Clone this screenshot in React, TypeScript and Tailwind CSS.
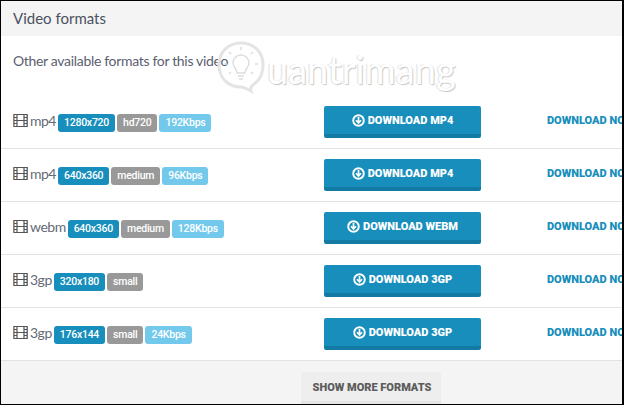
const blue = "bg-[#178ebb]";
const grey = "bg-[#999999]";
const light = "bg-[#73c9ec]";

type Row = { fmt: string; labels: [string, string, string?] };
const rows: Row[] = [
  { fmt: "mp4", labels: ["1280x720", "hd720", "192Kbps"] },
  { fmt: "mp4", labels: ["640x360", "medium", "96Kbps"] },
  { fmt: "webm", labels: ["640x360", "medium", "128Kbps"] },
  { fmt: "3gp", labels: ["320x180", "small"] },
  { fmt: "3gp", labels: ["176x144", "small", "24Kbps"] },
];

function Badge({ text, color }: { text: string; color: string }) {
  return (
    <span className={`${color} flex h-[18px] items-center rounded-[3px] px-[6px] font-['Roboto',sans-serif] text-[10.5px] font-medium leading-none tracking-[-0.25px] text-white`}>
      {text}
    </span>
  );
}

function FilmIcon() {
  return (
    <svg width="15" height="13" viewBox="0 0 15 13" fill="none" className="shrink-0">
      <path d="M0.5 0V13" stroke="#e0a468" />
      <path d="M14.5 0V13" stroke="#7f9fc4" />
      <rect x="1" y="0.5" width="13" height="12" stroke="#555555" />
      <path d="M4 0V13M11 0V13M4 6.5H11" stroke="#555555" strokeWidth="1.2" />
      <path d="M1 3.5H4M1 6.5H4M1 9.5H4M11 3.5H14M11 6.5H14M11 9.5H14" stroke="#555555" />
    </svg>
  );
}

function DownIcon() {
  return (
    <svg width="13" height="13" viewBox="0 0 13 13" fill="none" stroke="white" className="mb-[2px] shrink-0">
      <circle cx="6.5" cy="6.5" r="5.3" strokeWidth="1.9" />
      <path d="M6.5 3V8.4M4 6.2L6.5 9L9 6.2" strokeWidth="1.7" />
    </svg>
  );
}

function Watermark() {
  return (
    <div className="pointer-events-none absolute left-[214px] top-[39px] flex items-start">
      <svg width="52" height="54" viewBox="0 0 52 54" fill="none" stroke="#e4e4e4">
        <path d="M26 3C13 3 4 12 4 25C4 38 13 47 26 47C29 47 32 49 36 51C35 48 36 46 39 44C45 40 48 33 48 25C48 12 39 3 26 3Z" strokeWidth="3" />
        <path d="M26 15C21 15 18 19 18 23C18 27 22 29 22 33H30C30 29 34 27 34 23C34 19 31 15 26 15ZM23 36H29M24 39H28" strokeWidth="1.4" stroke="#dddddd" />
        <path d="M26 7V10M14 12L16 14M38 12L36 14M9 24H12M43 24H40M14 34L16 32M38 34L36 32" strokeWidth="1.6" stroke="#dddddd" />
      </svg>
      <span className="mt-[6px] font-['Lato',sans-serif] text-[38px] font-normal leading-[46px] text-white [text-shadow:1px_1px_1px_#c8c8c8,-1px_0_1px_#e0e0e0]">
        uantrimang
      </span>
    </div>
  );
}

export default function App() {
  return (
    <div className="relative flex h-[405px] w-[624px] flex-col overflow-hidden border-b border-l border-r-2 border-t border-black bg-white font-['Lato',sans-serif] text-[#555b66]">
      <div className="flex h-[35px] shrink-0 items-center bg-[#f4f4f4] pl-[12px] text-[15px] text-[#4b5160]">
        Video formats
      </div>
      <div className="flex h-[60px] shrink-0 items-start pl-[12px] pt-[15px] text-[14px] leading-[19px] tracking-[-0.32px] text-[#5b6170]">
        Other available formats for this video
      </div>
      <Watermark />
      {rows.map((r, i) => (
        <div key={i} className="flex h-[53px] shrink-0 items-start overflow-hidden border-b border-[#e2e2e2] pt-[10px]">
          <div className="flex w-[323px] shrink-0 items-start pl-[12px] pt-[8px]">
            <FilmIcon />
            <span className="ml-[2px] mr-[2px] text-[14px] leading-[14px] tracking-[-0.5px] text-[#666b76]">{r.fmt}</span>
            <span className="flex gap-[2px]">
              <Badge text={r.labels[0]} color={blue} />
              <Badge text={r.labels[1]} color={grey} />
              {r.labels[2] && <Badge text={r.labels[2]} color={light} />}
            </span>
          </div>
          <button className="flex h-[32px] w-[157px] shrink-0 items-center justify-center gap-[3px] rounded-[2px] border-b-4 border-[#137ba3] bg-[#178ebb] pt-[2px] font-['Roboto',sans-serif] text-[11px] font-black text-white">
            <DownIcon />
            <span>DOWNLOAD {r.fmt.toUpperCase()}</span>
          </button>
          <span className="ml-[66px] flex h-[30px] shrink-0 items-center whitespace-nowrap font-['Roboto',sans-serif] text-[11px] font-black text-[#178ebb]">
            DOWNLOAD NOW
          </span>
        </div>
      ))}
      <div className="flex flex-1 items-start bg-[#f4f4f4] pl-[300px] pt-[11px]">
        <button className="h-[33px] w-[140px] shrink-0 border-b-4 border-[#e4e4e4] bg-[#eeeeee] pl-[2px] pt-[3px] font-['Roboto',sans-serif] text-[11px] font-black text-[#5c5c5c]">
          SHOW MORE FORMATS
        </button>
      </div>
    </div>
  );
}
